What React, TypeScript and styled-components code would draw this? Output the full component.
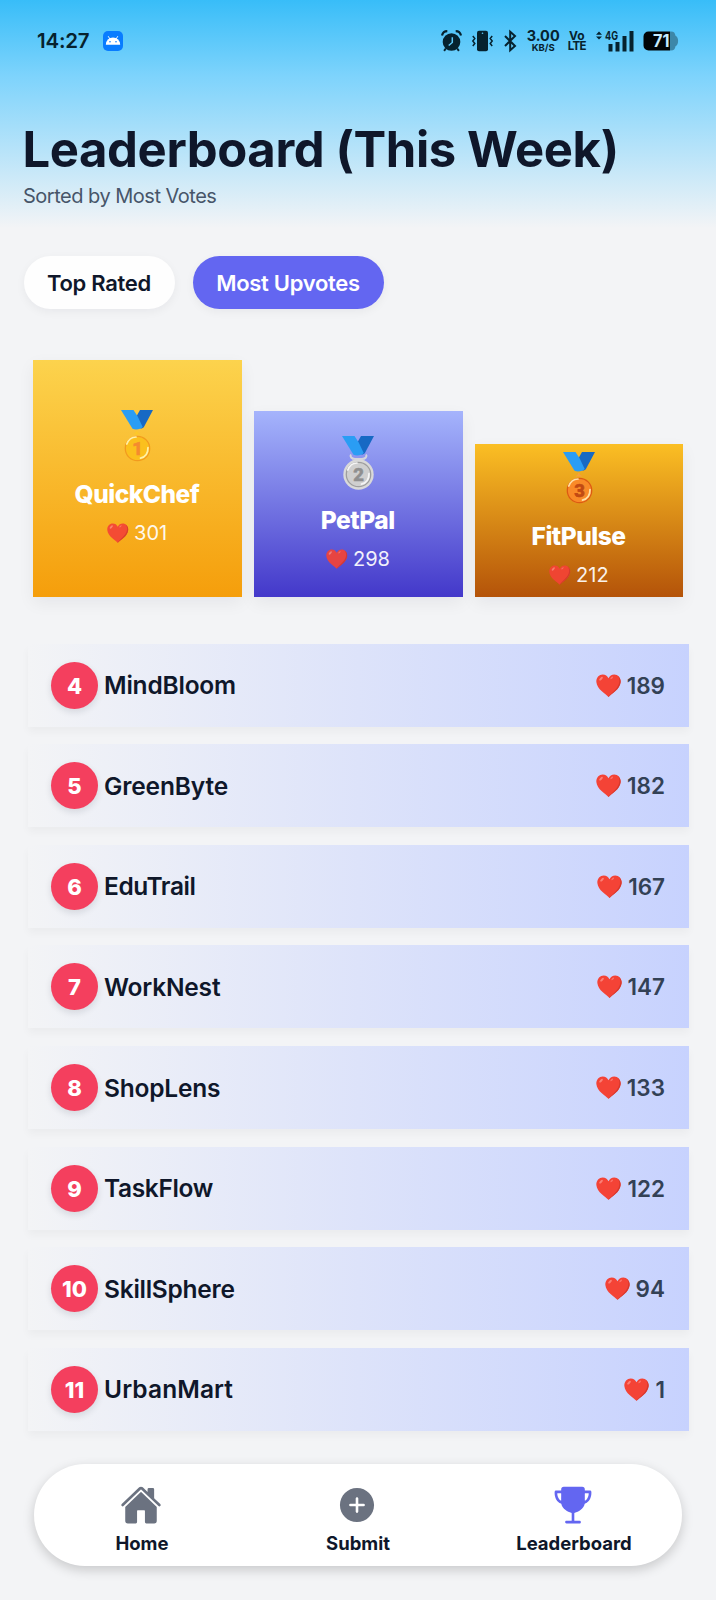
import React from "react";
import styled, { createGlobalStyle } from "styled-components";
import { IoHome, IoAddCircle, IoTrophy } from "react-icons/io5";

const GlobalStyle = createGlobalStyle`
  * { box-sizing: border-box; }
  body { margin: 0; background: #f3f4f6; }
`;

const Screen = styled.main`
  width: 716px;
  height: 1600px;
  overflow: hidden;
  display: flex;
  flex-direction: column;
  background: #f3f4f6;
  color: #0f172a;
  font-family: Inter, "Liberation Sans", sans-serif;
  white-space: nowrap;
`;

const Header = styled.header`
  height: 228px;
  background: linear-gradient(to bottom, #38bdf8 0%, #7dd3fc 33%, #f3f4f6 100%);
`;

const StatusBar = styled.div`
  height: 120px;
  padding: 29px 37px 0;
  display: flex;
  align-items: flex-start;
  color: #06222e;
`;

const Clock = styled.span`
  width: 66px;
  font-size: 20.5px;
  line-height: 24px;
  font-weight: 600;
  letter-spacing: -0.2px;
`;

const StatusIcons = styled.div`
  margin-left: auto;
  display: flex;
  align-items: center;
  height: 24px;
`;

const StatusPair = styled.div<{ $gap: number }>`
  display: flex;
  flex-direction: column;
  align-items: center;
  margin-left: ${(p) => p.$gap}px;
`;

const Tiny = styled.span<{ $size: number; $track?: number; $line: number }>`
  font-size: ${(p) => p.$size}px;
  line-height: ${(p) => p.$line}px;
  letter-spacing: ${(p) => p.$track ?? 0}px;
  font-weight: 700;
`;

const Glyph = styled.svg<{ $gap?: number }>`
  display: block;
  flex: none;
  margin-left: ${(p) => p.$gap ?? 0}px;
  overflow: visible;
`;

const BadgeGlyph = styled(Glyph)`
  margin-top: 2px;
`;

const Title = styled.h1`
  margin: 0 0 2px;
  padding-left: 22.5px;
  font-size: 49px;
  line-height: 60px;
  font-weight: 700;
  letter-spacing: -0.4px;
`;

const Subtitle = styled.p`
  margin: 0;
  padding-left: 23px;
  font-size: 20px;
  line-height: 28px;
  letter-spacing: -0.5px;
  color: #475569;
`;

const Tabs = styled.div`
  display: flex;
  gap: 18px;
  padding: 28px 24px 0;
`;

const Tab = styled.button<{ $active?: boolean; $width: number }>`
  width: ${(p) => p.$width}px;
  height: 52.5px;
  padding: 2px 1px 0 0;
  border: 0;
  border-radius: 27px;
  background: ${(p) => (p.$active ? "#6366f1" : "#fefefe")};
  color: ${(p) => (p.$active ? "#fff" : "#0f172a")};
  box-shadow: 0 3px 10px rgba(15, 23, 42, 0.05);
  font: 560 22px Inter, "Liberation Sans", sans-serif;
  letter-spacing: -0.3px;
`;

const Podium = styled.section`
  display: flex;
  align-items: flex-end;
  gap: 12px;
  height: 288px;
  padding: 0 32.5px 0 33px;
`;

const PodiumCard = styled.article<{ $height: number; $from: string; $to: string }>`
  flex: 1;
  height: ${(p) => p.$height}px;
  display: flex;
  flex-direction: column;
  align-items: center;
  justify-content: center;
  padding-right: 1px;
  background: linear-gradient(to bottom, ${(p) => p.$from}, ${(p) => p.$to});
  box-shadow: 0 6px 16px rgba(15, 23, 42, 0.06);
  color: #fff;
`;

const PodiumName = styled.h2`
  margin: 16px 0 10px;
  font-size: 24.5px;
  line-height: 32px;
  font-weight: 800;
  letter-spacing: -0.5px;
`;

const PodiumVotes = styled.div`
  display: flex;
  align-items: center;
  gap: 6px;
  font-size: 20px;
  line-height: 26px;
  opacity: 0.92;
`;

const List = styled.ol`
  list-style: none;
  margin: 47.2px 27px 0 28px;
  padding: 0;
  display: flex;
  flex-direction: column;
  gap: 17.6px;
`;

const Row = styled.li`
  height: 83px;
  padding: 0 24px 0 23px;
  display: flex;
  align-items: center;
  background: linear-gradient(to right, #f3f4f6, #c7d2fe);
  box-shadow: 0 5px 8px rgba(15, 23, 42, 0.035);
`;

const Rank = styled.span`
  width: 47px;
  height: 47px;
  margin-right: 6px;
  border-radius: 50%;
  display: flex;
  align-items: center;
  justify-content: center;
  background: #f43f5e;
  box-shadow: 0 3px 7px rgba(15, 23, 42, 0.12);
  color: #fff;
  font-size: 22px;
  font-weight: 800;
  padding-top: 1px;
`;

const RowName = styled.span<{ $track: number }>`
  flex: 1;
  font-size: 24.5px;
  font-weight: 560;
  letter-spacing: ${(p) => p.$track}px;
`;

const RowVotes = styled.span`
  display: flex;
  align-items: center;
  gap: 6px;
  color: #334155;
  font-size: 22.5px;
  font-weight: 560;
`;

const NavBar = styled.nav`
  height: 101.5px;
  margin: 33.5px 34px 0;
  border-radius: 51px;
  background: #fff;
  display: grid;
  grid-template-columns: repeat(3, 1fr);
  box-shadow: 0 4px 12px rgba(0, 0, 0, 0.18);
`;

const NavItem = styled.a<{ $active?: boolean }>`
  display: flex;
  flex-direction: column;
  align-items: center;
  padding-top: 19.5px;
  color: ${(p) => (p.$active ? "#6366f1" : "#6b7280")};

  > svg {
    margin-right: 2px;
  }
`;

const NavLabel = styled.span`
  margin-top: 5px;
  color: #0f172a;
  font-size: 18.5px;
  line-height: 24px;
  font-weight: 650;
`;

const Heart = ({ size }: { size: number }) => (
  <Glyph width={size} height={size * 0.93} viewBox="0 0 28 26" role="img" aria-label="heart">
    <path d="M14 25.600C11 22.400 1 17.200.4 9 .1 3.800 3.600.5 7.500.5c3 0 5.300 1.600 6.500 4.300C15.200 2.100 17.500.5 20.500.5c3.900 0 7.400 3.300 7.100 8.500C27 17.200 17 22.400 14 25.600Z" fill="#f44336" />
    <path d="M24.200 1.900c1.700 1.900 2.300 4.300 1.900 7-1 6.800-7.800 11.600-12.400 16.400l.3.300C17 22.400 27 17.200 27.600 9c.2-3-1.200-5.700-3.400-7.100Z" fill="#d5382d" />
    <ellipse cx="5.600" cy="5.200" rx="2.700" ry="1.200" transform="rotate(-45 5.600 5.200)" fill="#fb7f76" />
    <ellipse cx="17.600" cy="4.300" rx="1.900" ry=".8" transform="rotate(-42 17.600 4.300)" fill="#fb7068" />
  </Glyph>
);

type MedalTone = { ring: string; face: string; edge: string; digit: string; shine: string; radius: number };

const medalTones: Record<number, MedalTone> = {
  1: { ring: "#f29a1f", face: "#fbc01d", edge: "#fdc82a", digit: "#f58b2e", shine: "#fff0a8", radius: 12.6 },
  2: { ring: "#9e9e9e", face: "#cfcfcf", edge: "#d9d9d9", digit: "#8f8f8f", shine: "#f5f5f5", radius: 15.2 },
  3: { ring: "#dc5b12", face: "#f98a28", edge: "#f9a03c", digit: "#c24a12", shine: "#ffe0a6", radius: 12.6 },
};

const Medal = ({ place }: { place: number }) => {
  const t = medalTones[place];
  return (
    <Glyph width="32" height="52" viewBox="0 0 32 52" role="img" aria-label={`medal ${place}`}>
      <path d="M19 0H32l-8.800 16.500c-.8 1.400-2 2-3.700 2L14 9Z" fill="#1769c4" />
      <path d="M0 0h12.500l4.200 6.500 5 10.500c-1.500 2.500-7.500 3-10.200 1.800Z" fill="#2a9df4" />
      {place === 2 ? (
        <path d="M9 18.500c-1.500 2 .6 4.500 4 4.500h7c3.400 0 5.500-2.500 4-4.500" fill="none" stroke="#d5d5dc" strokeWidth="2" />
      ) : (
        <path d="M12.500 24.500c1-1.500 2-1 2.700-3.500h1.200c.4 2.500 2.100 2 3.100 3.500" fill={t.edge} />
      )}
      <circle cx="16.500" cy="38.500" r={t.radius} fill={t.edge} />
      <circle cx="16.500" cy="38.500" r="12.200" fill={t.face} stroke={t.ring} strokeWidth="1.300" />
      <path d="M5.800 34c1.600-4.400 5-6.800 9.200-7M27 37.500c.1 6-3 9.600-7.500 10.600" fill="none" stroke={t.shine} strokeWidth="1.700" strokeLinecap="round" />
      <text x="16.500" y="45" textAnchor="middle" fontSize="18.500" fontWeight="800" fontFamily="Roboto, sans-serif" fill={t.digit} stroke={t.digit} strokeWidth=".6">
        {place}
      </text>
    </Glyph>
  );
};

const AndroidBadge = () => (
  <BadgeGlyph width="20" height="20" viewBox="0 0 20 20">
    <rect width="20" height="20" rx="5" fill="#087cff" />
    <path d="M2.800 13.800a7.200 7.400 0 0 1 14.400 0Z" fill="#fff" />
    <path d="m5.200 5.200 1.800 3m7.800-3-1.800 3" stroke="#fff" strokeWidth=".9" />
    <circle cx="7" cy="10.800" r=".8" fill="#087cff" />
    <circle cx="13" cy="10.800" r=".8" fill="#087cff" />
  </BadgeGlyph>
);

const AlarmIcon = () => (
  <Glyph width="21" height="22" viewBox="0 0 21 22">
    <circle cx="10.500" cy="12" r="8.800" fill="currentColor" />
    <path d="M1 5.500C1.600 3 3.800 1.200 6.300 1.200M20 5.500c-.6-2.500-2.800-4.300-5.300-4.300" fill="none" stroke="currentColor" strokeWidth="2.200" />
    <path d="m4.800 18.500-1.700 2.300m13.100-2.300 1.700 2.300" stroke="currentColor" strokeWidth="2" />
    <path d="M11.300 7.200v5.300l-3.600 3" fill="none" stroke="#5cc8f8" strokeWidth="1.500" />
  </Glyph>
);

const VibrateIcon = () => (
  <Glyph $gap={10} width="21" height="22" viewBox="0 0 21 22">
    <rect x="5" y=".7" width="11" height="20.600" rx="2" fill="currentColor" />
    <circle cx="10.500" cy="3.200" r=".8" fill="#5cc8f8" />
    <path d="m.8 6 2 2.500-2 2.500 2 2.500-2 2.500M20.200 6l-2 2.500 2 2.500-2 2.500 2 2.500" fill="none" stroke="currentColor" strokeWidth="1.500" />
  </Glyph>
);

const BluetoothIcon = () => (
  <Glyph $gap={11} width="13" height="22" viewBox="0 0 13 22">
    <path d="m1 6 10 10-4.800 4.300V1.700L11 6 1 16" fill="none" stroke="currentColor" strokeWidth="2" />
  </Glyph>
);

const SignalIcon = () => (
  <Glyph $gap={10} width="38" height="22" viewBox="0 0 38 22">
    <path d="m0 4.700 3-3.200 3 3.200Zm0 1.700 3 3.200 3-3.200Z" fill="currentColor" />
    <text x="9" y="9.800" fontSize="11.500" fontWeight="700" fill="currentColor" textLength="13" lengthAdjust="spacingAndGlyphs">4G</text>
    <path d="M12.500 14h4v7.500h-4Zm7-2h4v9.500h-4Zm7-6h4v15.500h-4Zm7-5h4v20.500h-4Z" fill="currentColor" />
  </Glyph>
);

const BatteryIcon = () => (
  <Glyph $gap={9} width="36" height="20" viewBox="0 0 36 20">
    <path d="M27 .5h1c3 0 4 1.500 4.500 4.300C36 6 36 14 32.500 15.200 32 18 31 19.500 28 19.500h-1Z" fill="#3d87a8" />
    <path d="M5.500.5H27v19H5.500a5 5 0 0 1-5-5v-9a5 5 0 0 1 5-5Z" fill="#010507" />
    <text x="10" y="16" fontSize="17" fontWeight="700" fill="#c7ecff" textLength="16.500" lengthAdjust="spacingAndGlyphs">71</text>
  </Glyph>
);

const podium = [
  { place: 1, name: "QuickChef", votes: 301, height: 237, from: "#fcd34d", to: "#f59e0b" },
  { place: 2, name: "PetPal", votes: 298, height: 186, from: "#a5b4fc", to: "#4338ca" },
  { place: 3, name: "FitPulse", votes: 212, height: 153, from: "#fbbf24", to: "#b45309" },
];

const rows = [
  { rank: 4, name: "MindBloom", votes: 189, track: -0.2 },
  { rank: 5, name: "GreenByte", votes: 182, track: -0.15 },
  { rank: 6, name: "EduTrail", votes: 167, track: -0.45 },
  { rank: 7, name: "WorkNest", votes: 147, track: -0.2 },
  { rank: 8, name: "ShopLens", votes: 133, track: -0.2 },
  { rank: 9, name: "TaskFlow", votes: 122, track: -0.35 },
  { rank: 10, name: "SkillSphere", votes: 94, track: -0.25 },
  { rank: 11, name: "UrbanMart", votes: 1, track: 0.1 },
];

export default function App() {
  return (
    <Screen>
      <GlobalStyle />
      <Header>
        <StatusBar>
          <Clock>14:27</Clock>
          <AndroidBadge />
          <StatusIcons>
            <AlarmIcon />
            <VibrateIcon />
            <BluetoothIcon />
            <StatusPair $gap={10}>
              <Tiny $size={14.5} $line={12.5}>3.00</Tiny>
              <Tiny $size={9.5} $line={9.5}>KB/S</Tiny>
            </StatusPair>
            <StatusPair $gap={8}>
              <Tiny $size={12} $line={11.5}>Vo</Tiny>
              <Tiny $size={11.5} $line={11.5} $track={-0.6}>LTE</Tiny>
            </StatusPair>
            <SignalIcon />
            <BatteryIcon />
          </StatusIcons>
        </StatusBar>
        <Title>Leaderboard (This Week)</Title>
        <Subtitle>Sorted by Most Votes</Subtitle>
      </Header>
      <Tabs>
        <Tab $width={151}>Top Rated</Tab>
        <Tab $width={191} $active>Most Upvotes</Tab>
      </Tabs>
      <Podium>
        {podium.map((p) => (
          <PodiumCard key={p.place} $height={p.height} $from={p.from} $to={p.to}>
            <Medal place={p.place} />
            <PodiumName>{p.name}</PodiumName>
            <PodiumVotes>
              <Heart size={21.5} />
              {p.votes}
            </PodiumVotes>
          </PodiumCard>
        ))}
      </Podium>
      <List>
        {rows.map((r) => (
          <Row key={r.rank}>
            <Rank>{r.rank}</Rank>
            <RowName $track={r.track}>{r.name}</RowName>
            <RowVotes>
              <Heart size={25} />
              {r.votes}
            </RowVotes>
          </Row>
        ))}
      </List>
      <NavBar>
        <NavItem>
          <IoHome size={42} />
          <NavLabel>Home</NavLabel>
        </NavItem>
        <NavItem>
          <IoAddCircle size={42} />
          <NavLabel>Submit</NavLabel>
        </NavItem>
        <NavItem $active>
          <IoTrophy size={42} />
          <NavLabel>Leaderboard</NavLabel>
        </NavItem>
      </NavBar>
    </Screen>
  );
}
